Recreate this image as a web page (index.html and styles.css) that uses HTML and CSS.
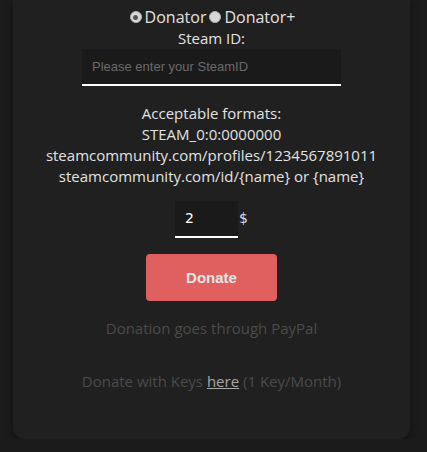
FILE: index.html
```html
<!DOCTYPE html>
<html>
<head>
<meta charset="utf-8">
<link rel="stylesheet" href="styles.css">
</head>
<body>
<div class="card">
  <div class="radios">
    <label class="opt"><span class="radio checked"></span>Donator</label>
    <label class="opt"><span class="radio"></span>Donator+</label>
  </div>
  <div class="label">Steam ID:</div>
  <div class="field">Please enter your SteamID</div>
  <div class="formats">
    <div>Acceptable formats:</div>
    <div>STEAM_0:0:0000000</div>
    <div>steamcommunity.com/profiles/1234567891011</div>
    <div>steamcommunity.com/id/{name} or {name}</div>
  </div>
  <div class="amount-row">
    <div class="amount">2</div>
    <span class="currency">$</span>
  </div>
  <button class="donate">Donate</button>
  <div class="note">Donation goes through PayPal</div>
  <div class="note keys">Donate with Keys <a class="link">here</a> (1 Key/Month)</div>
</div>
</body>
</html>
```

FILE: styles.css
```css
html, body {
  margin: 0;
  padding: 0;
  background: #1b1b1b;
}
body {
  font-family: "Open Sans", "Noto Sans", sans-serif;
  color: #e2e2e2;
  font-size: 15px;
}
.card {
  margin: 0 17px 0 13px;
  height: 439px;
  box-sizing: border-box;
  background: #202020;
  border-radius: 0 0 12px 12px;
  box-shadow: 0 2px 8px rgba(0,0,0,0.35);
  padding-top: 6px;
  display: flex;
  flex-direction: column;
  align-items: center;
}
.radios {
  display: flex;
  height: 22px;
  align-items: center;
  gap: 3px;
  font-size: 16px;
  margin-left: 2px;
}
.opt {
  display: flex;
  align-items: center;
  gap: 3px;
}
.radio {
  width: 12px;
  height: 12px;
  border-radius: 50%;
  background: #d9d9d9;
  box-sizing: border-box;
  border: 1px solid #b0b0b0;
  position: relative;
}
.radio.checked::after {
  content: "";
  position: absolute;
  left: 2.5px;
  top: 2.5px;
  width: 5px;
  height: 5px;
  border-radius: 50%;
  background: #555;
}
.label {
  line-height: 21px;
  height: 21px;
}
.field {
  height: 35px;
  background: #1a1a1a;
  border-bottom: 2px solid #ffffff;
  font-family: "Liberation Sans", Arial, sans-serif;
  font-size: 13px;
  color: #6a6a6a;
  line-height: 35px;
  padding-left: 10px;
  width: 249px;
}
.formats {
  margin-top: 17px;
  line-height: 21px;
  text-align: center;
}
.amount-row {
  margin-top: 14px;
  display: flex;
  align-items: center;
}
.amount {
  width: 53px;
  height: 35px;
  padding-left: 10px;
  background: #1a1a1a;
  border-bottom: 2px solid #fff;
  line-height: 35px;
  font-family: "DejaVu Sans", sans-serif;
  font-size: 14px;
  color: #fff;
}
.currency {
  width: 9px;
  font-family: "DejaVu Sans", sans-serif;
  font-size: 14px;
  color: #dde;
  padding-left: 1px;
  margin-top: -4px;
}
.donate {
  margin-top: 16px;
  width: 131px;
  height: 47px;
  border: none;
  border-radius: 4px;
  background: #e06060;
  color: #e6e6e6;
  font-family: "Liberation Sans", Arial, sans-serif;
  font-weight: bold;
  font-size: 15px;
}
.note {
  color: #4b4b4b;
  margin-top: 17px;
  line-height: 21px;
}
.keys {
  margin-top: 32px;
}
.link {
  color: #a8a8a8;
  text-decoration: underline;
}
```
